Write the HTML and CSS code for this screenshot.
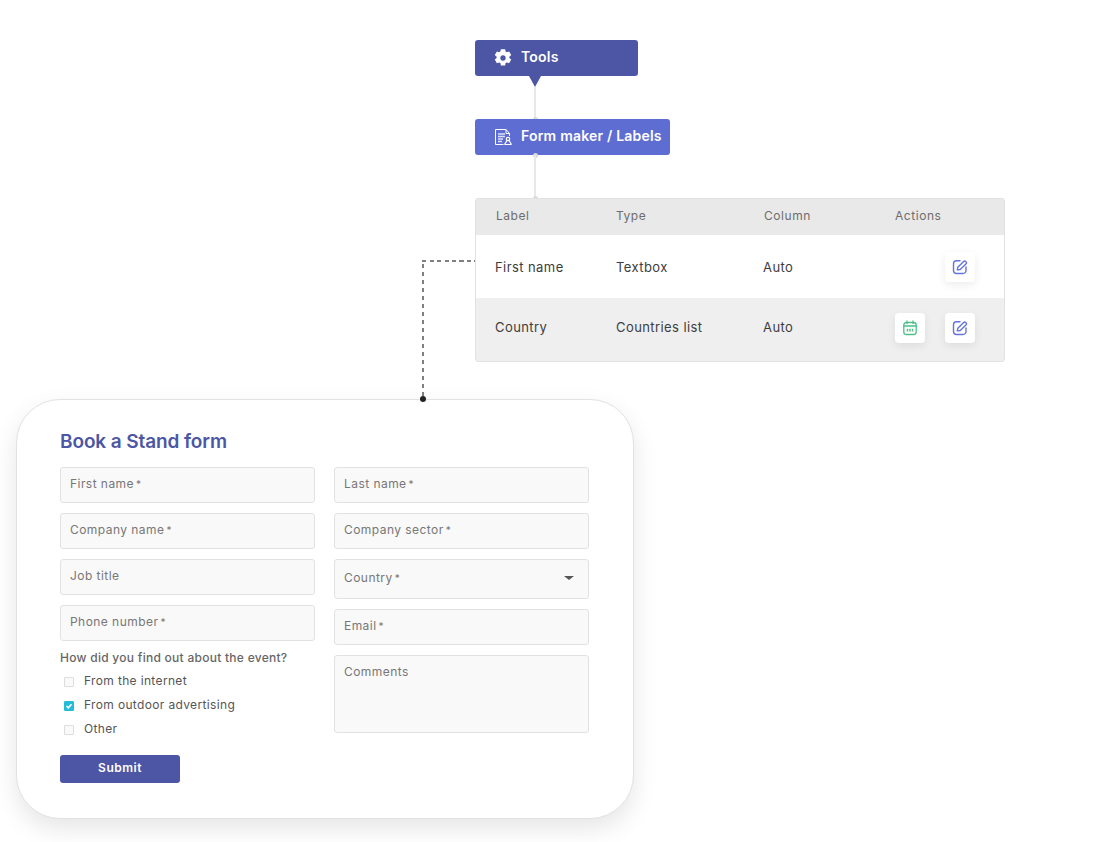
FILE: index.html
```html
<!DOCTYPE html>
<html lang="en">
<head>
<meta charset="utf-8">
<title>Book a Stand form</title>
<link rel="stylesheet" href="styles.css">
</head>
<body>
<main class="stage">
  <div class="node node-tools">
    <svg class="node-icon" viewBox="0 0 24 24" width="20" height="20"><path fill="#fff" fill-rule="evenodd" d="M14.600 1.500l.5 2.800c.5.2 1 .5 1.400.8l2.800-1 2.600 4.400-2.300 1.900c.1.500.1 1.100 0 1.600l2.300 1.900-2.600 4.400-2.800-1c-.4.300-.9.600-1.400.8l-.5 2.800H9.400l-.5-2.800c-.5-.2-1-.5-1.400-.8l-2.800 1-2.600-4.400 2.300-1.900c-.1-.5-.1-1.100 0-1.600L2.100 8.500l2.600-4.400 2.800 1c.4-.3.9-.6 1.400-.8l.5-2.800h5.200zM12 8.800a3.200 3.200 0 1 0 0 6.400 3.200 3.200 0 0 0 0-6.400z"/></svg>
    <span>Tools</span>
  </div>
  <div class="node-arrow"></div>
  <div class="link link-one"></div>
  <div class="dot dot-a"></div>
  <div class="node node-form">
    <svg class="node-icon" viewBox="0 0 18 18" width="18" height="18" fill="none" stroke="#fff"><path d="M1.500 1.500h10.500v4H15.500M12 1.500l3.500 4V8M1.500 1.500v15H9.500"/><path d="M4 6h7M4 8.500h7M4 11h5M4 13.500h4" stroke-width="1.500" opacity=".8"/><circle cx="14" cy="11" r="1.700" stroke-width="1.200"/><path d="M10.500 16.500l2.500-4M17.500 16.500l-2.500-4M10.500 16.500h7" stroke-width="1.200"/></svg>
    <span>Form maker / Labels</span>
  </div>
  <div class="dot dot-b"></div>
  <div class="link link-two"></div>
  <div class="dot dot-c"></div>

  <section class="table">
    <div class="row row-head">
      <span class="cell cell-label">Label</span>
      <span class="cell cell-type">Type</span>
      <span class="cell cell-column">Column</span>
      <span class="cell cell-actions">Actions</span>
    </div>
    <div class="row row-white">
      <span class="cell cell-label">First name</span>
      <span class="cell cell-type">Textbox</span>
      <span class="cell cell-column">Auto</span>
      <span class="cell cell-actions">
        <span class="act act-spacer"></span>
        <span class="act">
          <svg viewBox="0 0 16 16" width="16" height="16" fill="none" stroke="#6474dc" stroke-width="1.400" stroke-linecap="round" stroke-linejoin="round"><path d="M8 1.800H4.500A3 3 0 0 0 1.500 4.800v6.700a3 3 0 0 0 3 3H11a3 3 0 0 0 3-3V8"/><path d="M5.300 10.900l.5-2.600 5.600-5.600a1.700 1.700 0 0 1 2.500 2.400l-5.700 5.400z"/></svg>
        </span>
      </span>
    </div>
    <div class="row row-grey">
      <span class="cell cell-label">Country</span>
      <span class="cell cell-type">Countries list</span>
      <span class="cell cell-column">Auto</span>
      <span class="cell cell-actions">
        <span class="act">
          <svg viewBox="0 0 16 16" width="16" height="16" fill="none" stroke="#4fbf8b" stroke-width="1.300" stroke-linecap="round"><rect x="1.800" y="2.500" width="12.400" height="12" rx="2.500"/><path d="M2 6h12M5 1v2.500M11 1v2.500"/><path d="M5.500 8.800v2.700M8 8.800v2.700M10.500 8.800v2.700" stroke-width="1.500" stroke-linecap="butt"/></svg>
        </span>
        <span class="act">
          <svg viewBox="0 0 16 16" width="16" height="16" fill="none" stroke="#6474dc" stroke-width="1.400" stroke-linecap="round" stroke-linejoin="round"><path d="M8 1.800H4.500A3 3 0 0 0 1.500 4.800v6.700a3 3 0 0 0 3 3H11a3 3 0 0 0 3-3V8"/><path d="M5.300 10.900l.5-2.600 5.600-5.600a1.700 1.700 0 0 1 2.500 2.400l-5.700 5.400z"/></svg>
        </span>
      </span>
    </div>
  </section>

  <div class="dash dash-h"></div>
  <div class="dash dash-v"></div>
  <div class="dot-dark"></div>

  <section class="card">
    <h1 class="card-title">Book a Stand form</h1>
    <div class="cols">
      <div class="col">
        <div class="field">First name<i>*</i></div>
        <div class="field">Company name<i>*</i></div>
        <div class="field">Job title</div>
        <div class="field">Phone number<i>*</i></div>
        <p class="question">How did you find out about the event?</p>
        <div class="checks">
          <div class="check"><span class="box"></span>From the internet</div>
          <div class="check"><span class="box box-on"><svg viewBox="0 0 10 10" width="10" height="10" fill="none" stroke="#fff" stroke-width="1.600"><path d="M2.500 5.200l1.800 1.700 3.200-3.600"/></svg></span>From outdoor advertising</div>
          <div class="check"><span class="box"></span>Other</div>
        </div>
        <div class="submit">Submit</div>
      </div>
      <div class="col">
        <div class="field">Last name<i>*</i></div>
        <div class="field">Company sector<i>*</i></div>
        <div class="field field-select">Country<i>*</i><span class="caret"></span></div>
        <div class="field">Email<i>*</i></div>
        <div class="field field-area">Comments</div>
      </div>
    </div>
  </section>
</main>
</body>
</html>
```

FILE: styles.css
```css
* { box-sizing: border-box; }
html, body { margin: 0; background: #fff; }
body { font-family: "Inter", "Liberation Sans", sans-serif; color: #3d3d3d; }
.stage { position: relative; width: 1096px; height: 842px; overflow: hidden; }

.node {
  position: absolute; left: 475px; height: 36px; border-radius: 3px;
  display: flex; align-items: center; gap: 8px; padding: 0 0 3px 18px;
  color: #fff; font-size: 14px; font-weight: 600; letter-spacing: .2px;
}
.node-tools { top: 40px; width: 163px; background: #4c56a4; }
.node-form { top: 119px; width: 195px; background: #5e6dd2; gap: 9px; padding-left: 19px; }
.node-form .node-icon, .node-tools .node-icon { margin-top: 3px; }
.node-icon { flex: none; }
.node-arrow {
  position: absolute; left: 529px; top: 76px; width: 0; height: 0;
  border-left: 6px solid transparent; border-right: 6px solid transparent; border-top: 11px solid #4c56a4;
}
.link { position: absolute; left: 534px; width: 2px; background: #e8e8e8; }
.link-one { top: 87px; height: 32px; }
.link-two { top: 155px; height: 43px; }
.dot { position: absolute; left: 533px; width: 5px; height: 5px; border-radius: 50%; background: #d9d9d9; }
.dot-a { top: 117px; }
.dot-b { top: 153px; }
.dot-c { top: 196px; }

.table {
  position: absolute; left: 475px; top: 198px; width: 530px; height: 164px;
  border: 1px solid #e2e2e2; border-radius: 3px; overflow: hidden; background: #efefef;
  font-size: 13px;
}
.row { display: flex; align-items: center; padding-left: 19px; }
.row-head { height: 36px; background: #e9e9e9; color: #6d6d6d; font-size: 12px; padding: 0 0 4px 20px; }
.row-white { height: 63px; background: #fff; padding-top: 1px; }
.row-grey { height: 63px; background: #efefef; padding-bottom: 4px; }
.cell { flex: none; letter-spacing: .42px; }
.cell-label { width: 121px; }
.cell-type { width: 147px; }
.cell-column { width: 132px; }
.row-head .cell { letter-spacing: .55px; }
.row-head .cell-label { width: 120px; }
.row-head .cell-type { width: 148px; }
.row-head .cell-column { width: 131px; }
.row-white .cell:not(.cell-actions), .row-grey .cell:not(.cell-actions) { line-height: 16px; margin-top: -1px; }
.cell-actions { display: flex; gap: 20px; }
.act {
  width: 30px; height: 30px; border-radius: 4px; background: #fff;
  display: flex; align-items: center; justify-content: center;
  box-shadow: 0 3px 8px rgba(0,0,0,.08);
}
.act-spacer { background: none; box-shadow: none; }

.dash { position: absolute; }
.dash-h { left: 422px; top: 260px; width: 53px; height: 2px; background: repeating-linear-gradient(to right, #808080 0 4px, transparent 4px 7.500px); }
.dash-v { left: 422px; top: 262px; width: 2px; height: 137px; background: repeating-linear-gradient(to bottom, transparent 0 2px, #808080 2px 6px, transparent 6px 8px); }
.dot-dark { position: absolute; left: 420px; top: 396px; width: 6px; height: 6px; border-radius: 50%; background: #222; z-index: 2; }

.card {
  position: absolute; left: 16px; top: 399px; width: 618px; height: 420px;
  background: #fff; border: 1px solid #e2e2e2; border-radius: 44px;
  box-shadow: 0 10px 24px rgba(0,0,0,.1);
  padding: 30px 44px 0 43px;
}
.card-title { margin: 0 0 13px; height: 24px; line-height: 24px; font-size: 19px; font-weight: 600; color: #4c56a4; letter-spacing: -.1px; }
.cols { display: grid; grid-template-columns: 255px 255px; column-gap: 19px; }
.col { display: flex; flex-direction: column; gap: 10px; align-items: stretch; }
.field {
  height: 36px; border: 1px solid #e2e2e2; border-radius: 3px; background: #f9f9f9;
  padding: 8px 9px 0; font-size: 12px; line-height: 16px; color: #777; letter-spacing: .45px;
}
.field i { font-style: normal; font-size: 10px; margin-left: 2px; }
.field-select { height: 40px; position: relative; padding-top: 10px; }
.field-area { height: 78px; }
.caret {
  position: absolute; right: 14px; top: 16px; width: 0; height: 0;
  border-left: 5px solid transparent; border-right: 5px solid transparent; border-top: 4px solid #555;
}
.question { margin: 0; height: 14px; line-height: 14px; font-size: 12px; font-weight: 500; color: #666; letter-spacing: .27px; }
.checks { display: flex; flex-direction: column; margin-top: -7px; }
.check { display: flex; align-items: center; height: 24px; padding-left: 4px; gap: 10px; font-size: 12px; color: #555; letter-spacing: .35px; }
.box { width: 10px; height: 10px; margin-top: 3px; border: 1px solid #ddd; border-radius: 1px; background: #fafafa; flex: none; }
.box-on { background: #25bcd8; border-color: #25bcd8; display: flex; align-items: center; justify-content: center; }
.box-on svg { flex: none; }
.submit {
  width: 120px; height: 28px; margin-top: 5px; padding-bottom: 3px; border-radius: 3px; background: #4c56a4; color: #fff;
  display: flex; align-items: center; justify-content: center; font-size: 12px; font-weight: 600; letter-spacing: .5px;
}
```
